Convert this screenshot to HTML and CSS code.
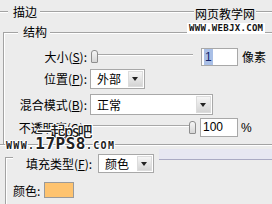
FILE: index.html
```html
<!DOCTYPE html>
<html>
<head>
<meta charset="utf-8">
<link rel="stylesheet" href="styles.css">
</head>
<body>
<div class="dialog">
  <div class="legend legend-main">
    <span class="rule lead-main"></span><span class="title title-main">描边</span><span class="rule grow rule-main"></span>
  </div>
  <div class="group">
    <div class="legend legend-sub">
      <span class="corner"></span><span class="title">结构</span><span class="rule grow rule-sub"></span>
    </div>
    <div class="gbody">
      <div class="row row-size">
        <span class="lbl">大小(<u>S</u>):</span>
        <div class="slider"><span class="track"></span><span class="thumb thumb-min"></span></div>
        <div class="field field-size"><span class="selected">1</span></div>
        <span class="unit">像素</span>
      </div>
      <div class="row row-pos">
        <span class="lbl">位置(<u>P</u>):</span>
        <div class="select select-pos"><span class="val">外部</span><span class="arrow"></span></div>
      </div>
      <div class="row row-blend">
        <span class="lbl">混合模式(<u>B</u>):</span>
        <div class="select select-blend"><span class="val">正常</span><span class="arrow"></span></div>
      </div>
      <div class="row row-opacity">
        <span class="lbl">不透明度(<u>O</u>):</span>
        <div class="slider"><span class="track"></span><span class="thumb thumb-max"></span></div>
        <div class="field field-op">100</div>
        <span class="unit pct">%</span>
      </div>
    </div>
  </div>
  <div class="sep"></div>
  <div class="fill-head">
    <span class="corner-fill"></span>
    <span class="lbl-fill">填充类型(<u>F</u>):</span>
    <div class="select select-fill"><span class="val">颜色</span><span class="arrow"></span></div>
    <span class="band"></span>
  </div>
  <div class="fill-body">
    <span class="lbl-color">颜色:</span>
    <span class="swatch"></span>
  </div>
</div>
<div class="wm wm-webjx-cn">网页教学网</div>
<div class="wm wm-webjx-url">www.webjx.com</div>
<div class="wm wm-17ps">一起ps吧</div>
<div class="wm wm-17ps-url"><span class="small">www.</span><span class="big">17PS8</span><span class="small">.com</span></div>
</body>
</html>
```
FILE: styles.css
```css
html, body {
  margin: 0;
  padding: 0;
}
body {
  width: 272px;
  height: 204px;
  overflow: hidden;
  position: relative;
  background: #ececec;
  color: #000;
  font: 12px/16px "Noto Sans CJK SC", sans-serif;
}
u {
  text-decoration: underline;
  text-underline-offset: 1px;
}
.rule {
  display: block;
  height: 0;
  border-top: 1px solid #a3a3a3;
  border-bottom: 1px solid #fff;
}
.grow { flex: 1; }
.legend {
  display: flex;
  align-items: flex-start;
}
.legend-main { height: 24px; }
.lead-main { width: 8px; margin-top: 11px; }
.title { line-height: 16px; white-space: nowrap; }
.title-main { margin: 4px 3px 0 5px; }
.rule-main { margin-top: 11px; }

.group { margin-left: 3px; }
.legend-sub { height: 16px; }
.corner {
  display: block;
  box-sizing: border-box;
  width: 15px;
  height: 8px;
  margin-top: 8px;
  border-top: 1px solid #a3a3a3;
  border-left: 1px solid #a3a3a3;
  box-shadow: inset 1px 1px 0 #fff;
}
.legend-sub .title { margin: 0 3px 0 5px; }
.rule-sub { margin-top: 8px; }

.gbody {
  box-sizing: border-box;
  height: 104px;
  padding-top: 6px;
  border-left: 1px solid #a3a3a3;
  box-shadow: inset 1px 0 0 #fff;
}
.row {
  display: flex;
  align-items: center;
}
.row-size { height: 21px; }
.row-pos { height: 22px; margin-top: 1px; }
.row-blend { height: 23px; margin-top: 3px; }
.row-opacity { height: 21px; margin-top: 1px; }
.lbl {
  flex-shrink: 0;
  width: 83px;
  text-align: right;
  white-space: nowrap;
}

.slider {
  position: relative;
  box-sizing: border-box;
  width: 102px;
  height: 13px;
  margin-left: 4px;
  padding-top: 4px;
}
.track {
  display: block;
  height: 0;
  border-top: 1px solid #a8a8a8;
  border-bottom: 1px solid #fff;
}
.thumb {
  position: absolute;
  top: 0;
  box-sizing: border-box;
  width: 7px;
  height: 13px;
  border: 1px solid #8e8e8e;
  border-radius: 3px 3px 1px 1px;
  background: linear-gradient(#f6f6f6, #d6d6d6);
}
.thumb-min { left: 0; }
.thumb-max { left: 98px; }

.field {
  box-sizing: border-box;
  width: 38px;
  margin-left: 7px;
  padding-left: 2px;
  border: 1px solid #a8a8a8;
  background: #fff;
  font: 12px/16px "Liberation Sans", sans-serif;
}
.field-size { height: 18px; margin-left: 8px; width: 37px; }
.field-op { height: 19px; line-height: 17px; }
.selected {
  display: inline-block;
  padding: 0 1px;
  background: #a9bfe6;
  color: #12246a;
}
.unit { margin-left: 4px; }
.pct {
  margin-left: 3px;
  font: 12px/16px "Liberation Sans", sans-serif;
}

.select {
  box-sizing: border-box;
  display: flex;
  justify-content: space-between;
  align-items: stretch;
  margin-left: 3px;
  border: 1px solid #a8a8a8;
  background: #fff;
}
.val {
  padding-left: 6px;
  align-self: center;
}
.arrow {
  position: relative;
  width: 15px;
  margin: 1px;
  background: linear-gradient(#f6f6f6, #d4d4d4);
  border: 1px solid #dcdcdc;
  box-sizing: border-box;
}
.arrow::after {
  content: "";
  position: absolute;
  left: 3px;
  top: 50%;
  margin-top: -2px;
  border-left: 3.5px solid transparent;
  border-right: 3.5px solid transparent;
  border-top: 4px solid #222;
}
.select-pos { width: 55px; height: 20px; }
.select-blend { width: 123px; height: 21px; }

.sep {
  height: 0;
  border-top: 1px solid #a3a3a3;
  border-bottom: 1px solid #fff;
}
.fill-head {
  display: flex;
  align-items: flex-start;
  height: 28px;
}
.corner-fill {
  display: block;
  box-sizing: border-box;
  width: 8px;
  height: 17px;
  margin: 11px 0 0 5px;
  border-top: 1px solid #a3a3a3;
  border-left: 1px solid #a3a3a3;
  box-shadow: inset 1px 1px 0 #fff;
}
.lbl-fill {
  width: 72px;
  margin: 10px 0 0 13px;
  white-space: nowrap;
}
.select-fill {
  width: 56px;
  height: 19px;
  margin: 8px 0 0 0;
}
.band {
  display: block;
  flex: 1;
  height: 10px;
  margin: 3px 0 0 5px;
  background: #e7e7f2;
  border-bottom: 1px solid #aaaac4;
}
.fill-body {
  box-sizing: border-box;
  display: flex;
  align-items: flex-start;
  height: 30px;
  margin-left: 5px;
  padding-left: 7px;
  border-left: 1px solid #a3a3a3;
  box-shadow: inset 1px 0 0 #fff;
}
.lbl-color { margin-top: 9px; }
.swatch {
  display: block;
  width: 30px;
  height: 16px;
  margin: 8px 0 0 4px;
  box-sizing: border-box;
  background: #fec36f;
  border: 1px solid #9a9a9a;
}

.wm {
  position: absolute;
  white-space: nowrap;
}
.wm-webjx-cn {
  left: 194px;
  top: 7px;
  padding: 0 1px;
  background: #ececec;
  font-size: 12px;
  line-height: 14px;
  color: #000;
}
.wm-webjx-url {
  left: 187px;
  top: 23px;
  padding: 1px 2px;
  background: #fff;
  font: bold 9px/8px "DejaVu Sans Mono", monospace;
  letter-spacing: 0.3px;
  text-transform: uppercase;
  color: #111;
}
.wm-17ps {
  left: 37px;
  top: 121px;
  font-size: 15px;
  line-height: 19px;
  letter-spacing: -1.5px;
  font-weight: 500;
  color: #1e1e1e;
  text-shadow: 1px 0 #fff, -1px 0 #fff, 0 1px #fff, 0 -1px #fff, 1px 1px #fff, -1px -1px #fff, 1px -1px #fff, -1px 1px #fff;
}
.wm-17ps-url {
  left: 6px;
  top: 137px;
  font-family: "DejaVu Sans Mono", monospace;
  font-weight: bold;
  color: #222;
  line-height: 13px;
  text-shadow: 1px 0 #fff, -1px 0 #fff, 0 1px #fff, 0 -1px #fff, 1px 1px #fff, -1px -1px #fff;
}
.wm-17ps-url .small {
  font-size: 10px;
  letter-spacing: 1.3px;
  text-transform: uppercase;
}
.wm-17ps-url .big {
  font-size: 16px;
  letter-spacing: 0.5px;
}
```
